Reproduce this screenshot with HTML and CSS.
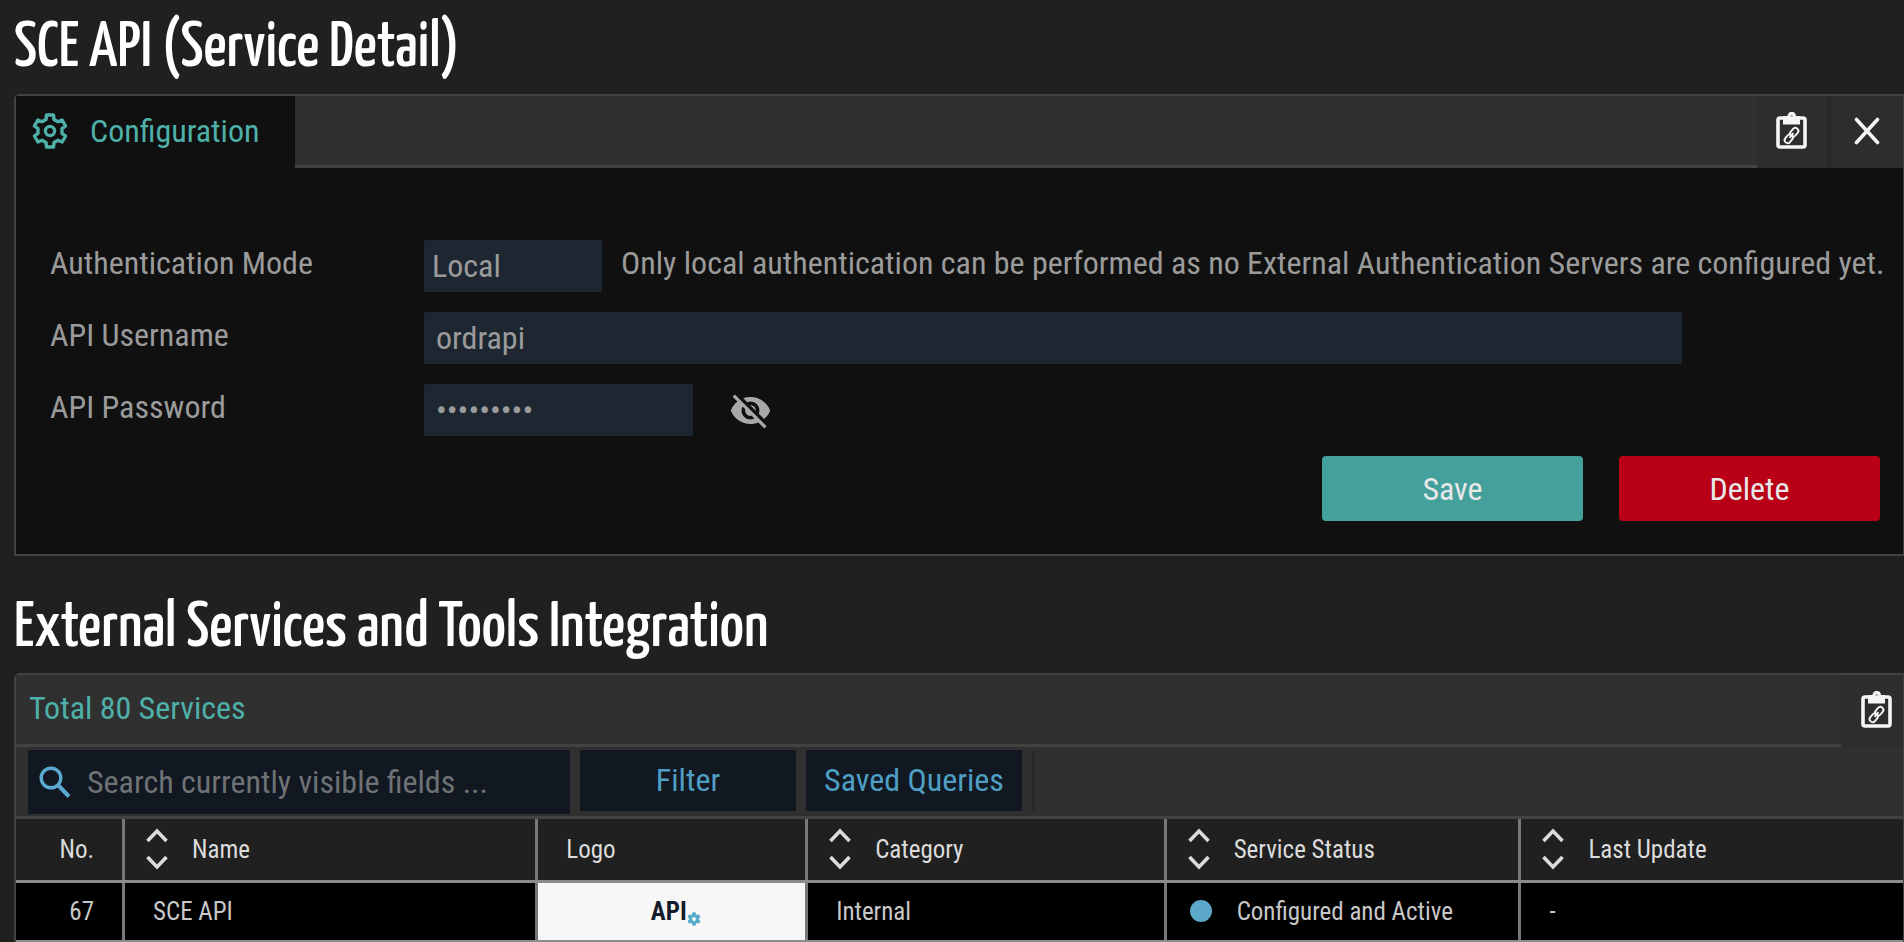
FILE: index.html
```html
<!DOCTYPE html>
<html lang="en">
<head>
<meta charset="utf-8">
<title>SCE API (Service Detail)</title>
<link rel="stylesheet" href="styles.css">
</head>
<body>
<svg class="sprite" aria-hidden="true">
  <symbol id="gear" viewBox="-18 -18 36 36">
    <path fill="none" stroke="currentColor" stroke-width="3.4" stroke-linejoin="round" d="M-3.5-16H3.5L4-11.5L8-9.2L12.1-11L15.6-5L12-2.3V2.3L15.6 5L12.1 11L8 9.2L4 11.5L3.5 16H-3.5L-4 11.5L-8 9.2L-12.1 11L-15.6 5L-12 2.3V-2.3L-15.6-5L-12.1-11L-8-9.2L-4-11.5Z"/>
    <circle r="4.6" fill="none" stroke="currentColor" stroke-width="3.2"/>
  </symbol>
  <symbol id="gear-solid" viewBox="-18 -18 36 36">
    <path fill="currentColor" fill-rule="evenodd" stroke="currentColor" stroke-width="2" d="M-3.5-16H3.5L4-11.5L8-9.2L12.1-11L15.6-5L12-2.3V2.3L15.6 5L12.1 11L8 9.2L4 11.5L3.5 16H-3.5L-4 11.5L-8 9.2L-12.1 11L-15.6 5L-12 2.3V-2.3L-15.6-5L-12.1-11L-8-9.2L-4-11.5ZM0-6A6 6 0 1 0 .01-6Z"/>
  </symbol>
  <symbol id="clipboard" viewBox="0 0 32 38">
    <rect x="2" y="6" width="27" height="29" rx="2" fill="none" stroke="currentColor" stroke-width="3.6"/>
    <path fill="currentColor" fill-rule="evenodd" d="M7 4h4.500a4.200 4.200 0 0 1 8.500 0H24v8.500H7zM15.700 3.500a1.800 1.800 0 1 0 .01 0z"/>
    <g fill="none" stroke="currentColor" stroke-width="1.900" transform="rotate(-50 15.500 23.500)">
      <rect x="6.500" y="20.500" width="9.500" height="6" rx="3"/>
      <rect x="15" y="20.500" width="9.500" height="6" rx="3"/>
      <path d="M12.500 23.500h6"/>
    </g>
  </symbol>
  <symbol id="sort" viewBox="0 0 22 42">
    <path fill="none" stroke="currentColor" stroke-width="3.6" d="M1.500 13L11 3L20.500 13M1.500 29L11 39L20.500 29"/>
  </symbol>
</svg>

<main class="page">
  <h1 class="title">SCE API (Service Detail)</h1>
  <section class="panel">
    <header class="bar">
      <button class="tab" type="button"><svg class="tab-icon"><use href="#gear"/></svg>Configuration</button>
      <div class="actions">
        <button class="action" type="button" aria-label="Copy link"><svg class="clip"><use href="#clipboard"/></svg></button>
        <button class="action action-close" type="button" aria-label="Close"><svg class="close" viewBox="0 0 26 28"><path fill="none" stroke="currentColor" stroke-width="3.6" stroke-linecap="round" d="M2.500 2.500L23.500 25.500M23.500 2.500L2.500 25.500"/></svg></button>
      </div>
    </header>
    <form class="form">
      <div class="row">
        <label class="label" for="mode">Authentication Mode</label>
        <select class="field field-mode" id="mode"><option>Local</option></select>
        <span class="hint">Only local authentication can be performed as no External Authentication Servers are configured yet.</span>
      </div>
      <div class="row">
        <label class="label" for="user">API Username</label>
        <input class="field field-user" id="user" type="text" value="ordrapi">
      </div>
      <div class="row">
        <label class="label" for="pass">API Password</label>
        <input class="field field-pass" id="pass" type="password" value="ordrapi12">
        <button class="reveal" type="button" aria-label="Show password"><svg class="eye" viewBox="0 0 24 24"><path fill="currentColor" d="M12 7c2.760 0 5 2.240 5 5 0 .65-.13 1.260-.36 1.830l2.920 2.920c1.510-1.260 2.700-2.890 3.430-4.750-1.730-4.390-6-7.500-11-7.500-1.400 0-2.740.25-3.980.7l2.160 2.160C10.740 7.130 11.350 7 12 7zM2 4.270l2.280 2.280.46.46C3.080 8.300 1.780 10.020 1 12c1.730 4.390 6 7.500 11 7.500 1.550 0 3.030-.3 4.380-.84l.42.42L19.730 22 21 20.730 3.270 3 2 4.270zM7.530 9.800l1.550 1.550c-.05.21-.08.43-.08.65 0 1.660 1.340 3 3 3 .22 0 .44-.03.65-.08l1.550 1.550c-.67.33-1.410.53-2.200.53-2.760 0-5-2.240-5-5 0-.79.2-1.530.53-2.200zm4.310-.78l3.150 3.150.02-.16c0-1.660-1.340-3-3-3l-.17.01z"/></svg></button>
      </div>
      <div class="buttons">
        <button class="button button-save" type="button">Save</button>
        <button class="button button-delete" type="button">Delete</button>
      </div>
    </form>
  </section>

  <h2 class="title title-second">External Services and Tools Integration</h2>
  <section class="panel panel-list">
    <header class="bar">
      <span class="total">Total 80 Services</span>
      <button class="action action-edge" type="button" aria-label="Copy link"><svg class="clip"><use href="#clipboard"/></svg></button>
    </header>
    <div class="toolbar">
      <label class="search">
        <svg class="search-icon" viewBox="0 0 32 32"><g fill="none" stroke="currentColor" stroke-width="3.4"><circle cx="12" cy="12" r="9.800"/><path d="M19 19L30 30.500" stroke-width="4"/></g></svg>
        <input class="search-input" type="text" aria-label="Search" placeholder="Search currently visible fields ...">
      </label>
      <button class="tool" type="button">Filter</button>
      <button class="tool" type="button">Saved Queries</button>
      <span class="divider"></span>
    </div>
    <table class="table">
      <colgroup><col class="c-no"><col class="c-name"><col class="c-logo"><col class="c-cat"><col class="c-status"><col></colgroup>
      <thead>
        <tr>
          <th class="num">No.</th>
          <th><div class="head"><svg class="sort"><use href="#sort"/></svg>Name</div></th>
          <th class="plain">Logo</th>
          <th><div class="head"><svg class="sort"><use href="#sort"/></svg>Category</div></th>
          <th><div class="head"><svg class="sort"><use href="#sort"/></svg>Service Status</div></th>
          <th><div class="head"><svg class="sort"><use href="#sort"/></svg>Last Update</div></th>
        </tr>
      </thead>
      <tbody>
        <tr>
          <td class="num">67</td>
          <td class="plain">SCE API</td>
          <td class="logo-cell"><div class="logo">API<svg class="logo-gear"><use href="#gear-solid"/></svg></div></td>
          <td class="plain">Internal</td>
          <td><div class="status"><span class="dot"></span>Configured and Active</div></td>
          <td class="plain">-</td>
        </tr>
      </tbody>
    </table>
  </section>
</main>
</body>
</html>
```
FILE: styles.css
```css
* { box-sizing: border-box; }

body {
  margin: 0;
  background: #202020;
  color: #9b9b9b;
  font-family: "Roboto Condensed", Roboto, sans-serif;
  font-size: 32px;
  overflow: hidden;
}

button, input, select {
  margin: 0;
  border: 0;
  font: inherit;
  color: inherit;
  background: none;
}

svg { display: block; flex: none; }
.sprite { position: absolute; width: 0; height: 0; }

.page { padding-left: 14px; }

.title {
  margin: 0;
  height: 94px;
  padding-top: 5px;
  color: #fff;
  font-family: "Yanone Kaffeesatz", "Roboto Condensed", sans-serif;
  font-size: 65px;
  font-weight: 500;
  line-height: 88px;
  white-space: nowrap;
}
.title-second { height: 117px; padding-top: 29px; }

.panel {
  border: 2px solid #424242;
  border-right-width: 1px;
  border-radius: 6px 0 0 0;
  background: #101010;
}

.bar {
  display: flex;
  justify-content: space-between;
  height: 72px;
  background: #303030;
  border-bottom: 3px solid #424242;
}
.tab {
  display: flex;
  align-items: center;
  gap: 22px;
  height: 72px;
  padding: 0 36px 2px 16px;
  background: #101010;
  color: #4eb0a8;
}
.tab-icon { width: 36px; height: 36px; }
.actions { display: flex; }
.action {
  display: flex;
  align-items: center;
  justify-content: center;
  width: 70px;
  height: 72px;
  padding: 0 0 2px;
  background: #2d2d2d;
  color: #f5f5f5;
}
.action-close { width: 76px; border-left: 4px solid #282828; }
.action-edge { width: 62px; justify-content: flex-end; padding-right: 10px; }
.clip { width: 32px; height: 38px; }
.close { width: 26px; height: 28px; }

.form {
  display: flex;
  flex-direction: column;
  gap: 20px;
  padding: 72px 23px 33px 34px;
}
.row { display: flex; height: 52px; white-space: nowrap; }
.label { width: 374px; line-height: 46px; flex: none; }
.field {
  height: 52px;
  border-radius: 2px;
  background: #1e2731;
  color: #9b9b9b;
  padding: 0 12px;
}
.field-mode { width: 178px; padding: 0 8px; appearance: none; }
.field-user { width: 1258px; }
.field-pass { width: 269px; }
.hint { flex: 1; min-width: 0; margin-left: 19px; line-height: 46px; }
.reveal { padding: 0; margin-left: 36px; color: #a9a9a9; }
.eye { width: 43px; height: 43px; }

.buttons { display: flex; justify-content: flex-end; gap: 36px; }
.button {
  width: 261px;
  height: 65px;
  border-radius: 4px;
  color: #e8e8e8;
}
.button-save { background: #44a09b; }
.button-delete { background: #b90016; }

.panel-list { border-bottom: 0; }
.total { padding-left: 13px; line-height: 66px; color: #4eb0a8; }

.toolbar {
  display: flex;
  align-items: flex-start;
  gap: 10px;
  height: 72px;
  padding: 3px 0 0 12px;
  background: #303030;
  border-bottom: 3px solid #424242;
}
.search {
  display: flex;
  align-items: center;
  gap: 16px;
  width: 542px;
  height: 64px;
  padding-left: 11px;
  background: #111821;
  color: #5aa9d0;
}
.search-icon { width: 32px; height: 32px; }
.search-input { flex: 1; min-width: 0; padding: 0; color: #9b9b9b; }
.search-input::placeholder { color: #6f7275; opacity: 1; }
.tool {
  width: 216px;
  height: 61px;
  padding: 0 0 2px;
  background: #111821;
  color: #4f9fc4;
  white-space: nowrap;
}
.divider { width: 3px; height: 61px; background: #2a2a2a; }

.table {
  width: 100%;
  table-layout: fixed;
  border-collapse: collapse;
  color: #c8c8c8;
  font-size: 25px;
}
.c-no { width: 5.7%; }
.c-name { width: 21.9%; }
.c-logo { width: 14.3%; }
.c-cat { width: 19%; }
.c-status { width: 18.8%; }

th, td {
  padding: 0;
  border-right: 3px solid #77787a;
  border-bottom: 3px solid #8a8b8d;
  text-align: left;
  font-weight: 400;
  white-space: nowrap;
}
th:last-child, td:last-child { border-right: 0; }
th { height: 62px; background: #202020; color: #dcdcdc; }
td { height: 60px; background: #000; }
.num { text-align: right; padding-right: 28px; }
.plain { padding-left: 28px; }
.head { display: flex; align-items: center; gap: 24px; padding-left: 21px; }
.sort { width: 22px; height: 42px; }
.logo-cell { background: #f7f7f7; }
.logo {
  display: flex;
  align-items: center;
  justify-content: center;
  padding-left: 8px;
  color: #141c2b;
  font-size: 25px;
  font-weight: 700;
}
.logo-gear { width: 14px; height: 14px; color: #55a9cb; align-self: flex-end; }
.status { display: flex; align-items: center; gap: 25px; padding-left: 23px; }
.dot { width: 22px; height: 22px; border-radius: 50%; background: #5ba8c8; }
```
